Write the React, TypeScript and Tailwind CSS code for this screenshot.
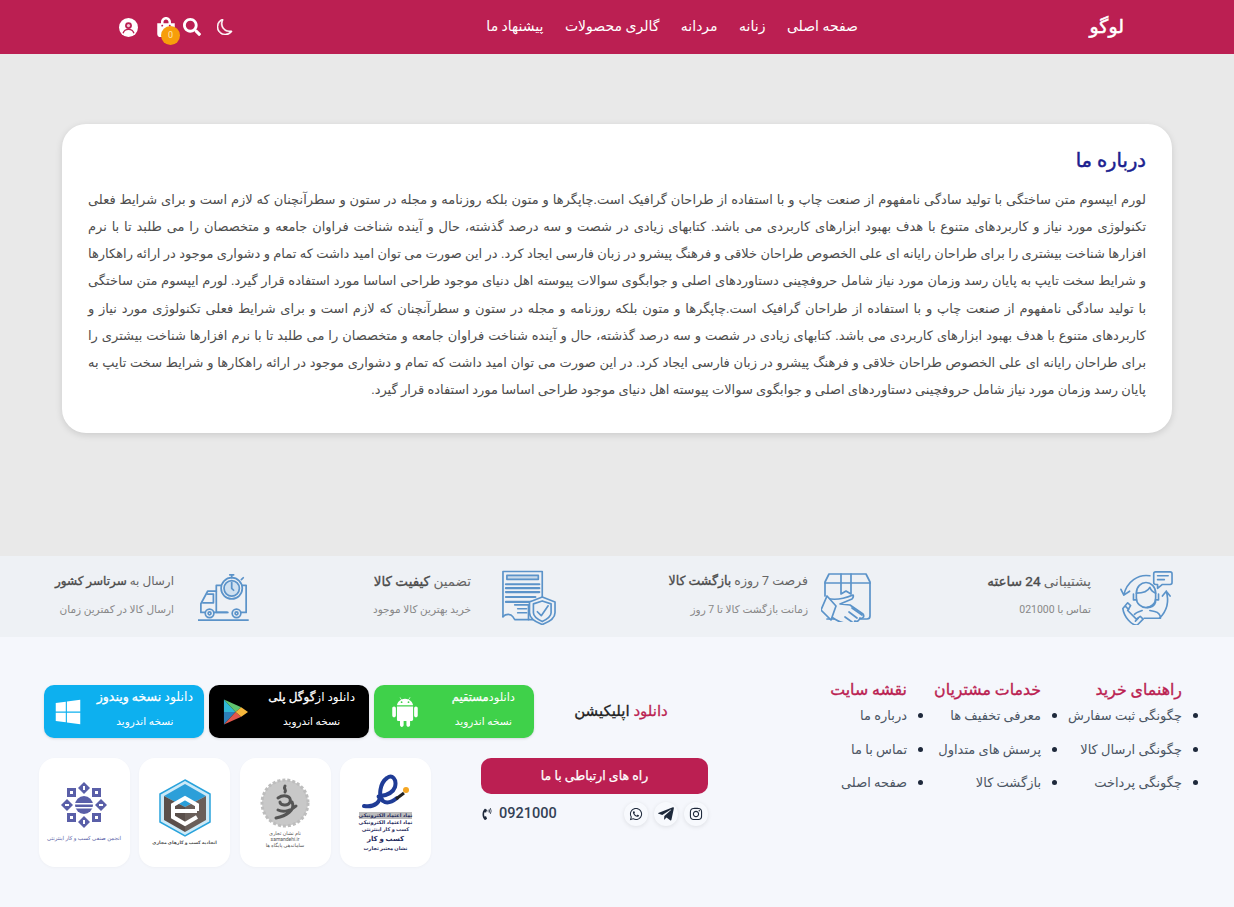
import { FaInstagram, FaPhoneVolume, FaSearch, FaShoppingBag, FaTelegramPlane, FaWhatsapp, FaWindows } from "react-icons/fa"
import { AiFillAndroid } from "react-icons/ai"
import { BsMoon } from "react-icons/bs"

const lines = [
  "لورم ایپسوم متن ساختگی با تولید سادگی نامفهوم از صنعت چاپ و با استفاده از طراحان گرافیک است.چاپگرها و متون بلکه روزنامه و مجله در ستون و سطرآنچنان که لازم است و برای شرایط فعلی",
  "تکنولوژی مورد نیاز و کاربردهای متنوع با هدف بهبود ابزارهای کاربردی می باشد. کتابهای زیادی در شصت و سه درصد گذشته، حال و آینده شناخت فراوان جامعه و متخصصان را می طلبد تا با نرم",
  "افزارها شناخت بیشتری را برای طراحان رایانه ای علی الخصوص طراحان خلاقی و فرهنگ پیشرو در زبان فارسی ایجاد کرد. در این صورت می توان امید داشت که تمام و دشواری موجود در ارائه راهکارها",
  "و شرایط سخت تایپ به پایان رسد وزمان مورد نیاز شامل حروفچینی دستاوردهای اصلی و جوابگوی سوالات پیوسته اهل دنیای موجود طراحی اساسا مورد استفاده قرار گیرد. لورم ایپسوم متن ساختگی",
  "با تولید سادگی نامفهوم از صنعت چاپ و با استفاده از طراحان گرافیک است.چاپگرها و متون بلکه روزنامه و مجله در ستون و سطرآنچنان که لازم است و برای شرایط فعلی تکنولوژی مورد نیاز و",
  "کاربردهای متنوع با هدف بهبود ابزارهای کاربردی می باشد. کتابهای زیادی در شصت و سه درصد گذشته، حال و آینده شناخت فراوان جامعه و متخصصان را می طلبد تا با نرم افزارها شناخت بیشتری را",
  "برای طراحان رایانه ای علی الخصوص طراحان خلاقی و فرهنگ پیشرو در زبان فارسی ایجاد کرد. در این صورت می توان امید داشت که تمام و دشواری موجود در ارائه راهکارها و شرایط سخت تایپ به",
]
const lastLine = "پایان رسد وزمان مورد نیاز شامل حروفچینی دستاوردهای اصلی و جوابگوی سوالات پیوسته اهل دنیای موجود طراحی اساسا مورد استفاده قرار گیرد."

const nav = ["صفحه اصلی", "زنانه", "مردانه", "گالری محصولات", "پیشنهاد ما"]

const linkCols = [
  { title: "راهنمای خرید", w: "w-[141px]", items: ["چگونگی ثبت سفارش", "چگونگی ارسال کالا", "چگونگی پرداخت"] },
  { title: "خدمات مشتریان", w: "w-[134px]", items: ["معرفی تخفیف ها", "پرسش های متداول", "بازگشت کالا"] },
  { title: "نقشه سایت", w: "w-[90px]", items: ["درباره ما", "تماس با ما", "صفحه اصلی"] },
]

const UserIcon = () => (
  <svg width="19" height="19" viewBox="0 0 20 20">
    <circle cx="10" cy="10" r="10" fill="#fff" />
    <circle cx="10" cy="8" r="3.600" fill="#bb1f52" />
    <circle cx="10" cy="8" r="1.700" fill="#f3c9d6" />
    <path d="M4.300 16c1-3 3.300-4 5.700-4s4.700 1 5.700 4" fill="none" stroke="#bb1f52" strokeWidth="1.500" />
  </svg>
)

const SupportIcon = () => (
  <svg width="54" height="56" viewBox="0 0 56 56" fill="none" stroke="#5b93c9" strokeWidth="1.700" strokeLinecap="round" strokeLinejoin="round">
    <path d="M38 2H53a2 2 0 0 1 2 2V13a2 2 0 0 1-2 2H45l-5 4V15H38a2 2 0 0 1-2-2V4a2 2 0 0 1 2-2z" />
    <path d="M40 6h11M40 10h7" />
    <path d="M32 6C20 4 8 12 5 26M5 26l-3-6M5 26l6-4" />
    <path d="M49 22c3 10 1 20-7 28M49 22l-4 5M49 22l4 5" />
    <path d="M18 24c0-7 5-11 10-11s10 4 10 11v5c0 6-5 10-10 10s-10-4-10-10z" />
    <path d="M18 24c6 0 12-2 14-6 1 3 3 5 6 6" />
    <path d="M15 25v6h3M41 25v6h-3M38 33c-1 4-5 6-9 6" />
    <path d="M24 42c-3 1-6 2-8 4M32 42l5 1c4 1 6 4 6 7H26" />
    <path d="M4 40l5-6 3 3-3 5 9 9 4-3 3 3-6 6c-6 1-14-9-15-17z" />
    <path d="M7 38l3 3M17 53l3-3" />
  </svg>
)

const BoxHandIcon = () => (
  <svg width="53" height="50" viewBox="8 4 53 50" fill="none" stroke="#5b93c9" strokeWidth="1.700" strokeLinecap="round" strokeLinejoin="round">
    <path d="M12 28V14L16 6H53L57 14V48a3 3 0 0 1-3 3H14" />
    <path d="M12 15H57M28 6V26l5-3 5 3V6" />
    <path d="M14 30c8 3 16 1 26-3 1 2 0 3-1 4l-12 5 10 1 13 9c2 3-1 5-3 4-1 3-3 4-5 3-1 3-4 3-6 2-7 1-14-3-20-8z" fill="#eef1f5" />
    <path d="M14 28L8 42 18 52 23 38z" fill="#eef1f5" />
    <path d="M44 50l-8-6M39 54l-7-5M49 47l-10-7" />
  </svg>
)

const ShieldDocIcon = () => (
  <svg width="55" height="56" viewBox="0 0 56 56" fill="none" stroke="#5b93c9" strokeWidth="1.700" strokeLinecap="round" strokeLinejoin="round">
    <path d="M2 48V2H42V28" />
    <path d="M2 48c3-3 8-3 10 0l2 3h18" />
    <path d="M6 6h32v4H6z" fill="#5b93c9" fillOpacity="0.250" />
    <path d="M5 15h34M5 19h34M5 23h34M5 28h30M5 33h26" strokeWidth="2.200" />
    <path d="M14 36h14v15M17 40h9M17 44h9" />
    <path d="M42 28l13 5v11c0 5-5 9-13 12-8-3-13-7-13-12V33z" fill="#eef1f5" />
    <path d="M42 32l9 3v9c0 3-3 6-9 9-6-3-9-6-9-9v-9z" />
    <path d="M37 43l4 4 7-10" />
  </svg>
)

const TruckIcon = () => (
  <svg width="52" height="50" viewBox="0 0 54 50" fill="none" stroke="#5b93c9" strokeWidth="1.800" strokeLinecap="round" strokeLinejoin="round">
    <path d="M19 13H50V41H44M31 41H19V13" />
    <path d="M19 19H10L3 32V41H8" />
    <path d="M10 22h6v9H5" />
    <path d="M16 41H30" />
    <circle cx="35" cy="16" r="11" fill="#eef1f5" />
    <circle cx="35" cy="16" r="8" fill="#cfe0f0" />
    <path d="M35 10v6l2 2M33 2h4M35 2v3M45 7l2-2" />
    <circle cx="12" cy="42" r="4.500" fill="#eef1f5" />
    <circle cx="12" cy="42" r="1.500" />
    <circle cx="40" cy="42" r="4.500" fill="#eef1f5" />
    <circle cx="40" cy="42" r="1.500" />
    <path d="M0 49H52" />
  </svg>
)

const features = [
  { icon: <SupportIcon />, gap: "gap-[28px]", w: "w-[104px]", size: "text-[13.500px]", last: "", before: "پشتیبانی ", bold: "24 ساعته", sub: "تماس با 021000" },
  { icon: <BoxHandIcon />, gap: "gap-[13px]", w: "w-[139px]", size: "text-[12.500px]", last: "", before: "فرصت 7 روزه ", bold: "بازگشت کالا", sub: "زمانت بازگشت کالا تا 7 روز" },
  { icon: <ShieldDocIcon />, gap: "gap-[30px]", w: "w-[101px]", size: "text-[13.500px]", last: "", before: "تضمین ", bold: "کیفیت کالا", sub: "خرید بهترین کالا موجود" },
  { icon: <TruckIcon />, gap: "gap-[24px]", w: "w-[117px]", size: "text-[12px]", last: "mr-[7px]", before: "ارسال به ", bold: "سرتاسر کشور", sub: "ارسال کالا در کمترین زمان" },
]

const PlayIcon = () => (
  <svg width="25" height="28" viewBox="0 0 26 28">
    <path d="M1 1V14H13z" fill="#2fb9d6" />
    <path d="M1 27V14H13z" fill="#2c7fb8" />
    <path d="M1 1L13 14 19 9z" fill="#5fc46f" />
    <path d="M1 27L13 14 19 19z" fill="#e2574c" />
    <path d="M19 9L26 14 19 19 13 14z" fill="#f6b73c" />
  </svg>
)

const EnamadBadge = () => (
  <div className="flex flex-col items-center">
    <svg width="50" height="36" viewBox="0 0 50 36" fill="none">
      <path d="M3 33c12 2 17-6 15-9-3-2 12 1 16-10C36 6 31 1 26 5c-7 5-9 18-4 23 4 3 9 1 14-3" stroke="#1f3c96" strokeWidth="4" strokeLinecap="round" />
      <path d="M35 26l8-6" stroke="#222" strokeWidth="3" />
      <circle cx="45" cy="17" r="3" fill="#f5a623" />
    </svg>
    <div className="mt-[3px] text-[5px] leading-[7px] font-bold text-[#1f2a5c] text-center whitespace-nowrap">
      <div className="bg-[#8f8f8f]/60">نماد اعتماد الکترونیکی</div>
      <div>نماد اعتماد الکترونیکی</div>
      <div>کسب و کار اینترنتی</div>
      <div className="text-[7px] leading-[12px]">کسب و کار</div>
      <div>نشان معتبر تجارت</div>
    </div>
  </div>
)

const SamandehiBadge = () => (
  <div className="flex flex-col items-center">
    <svg width="50" height="50" viewBox="0 0 50 50">
      <circle cx="25" cy="25" r="23" fill="#c8c8c8" stroke="#bdbdbd" strokeWidth="3" strokeDasharray="3 2" />
      <path d="M25 8c-2 3 2 4 0 6M18 20c6-4 14-2 12 4-2 5-10 3-10 0M32 24c4 8-6 14-16 16M18 32c6 3 14 0 18-4" fill="none" stroke="#555" strokeWidth="3" strokeLinecap="round" />
    </svg>
    <div className="mt-[2px] text-[5px] leading-[6px] text-[#555] text-center whitespace-nowrap">
      <div>نام نشان تجاری</div>
      <div>samandehi.ir</div>
      <div>ساماندهی پایگاه ها</div>
    </div>
  </div>
)

const HexBadge = () => (
  <div className="flex flex-col items-center">
    <svg width="52" height="58" viewBox="0 0 52 58">
      <path d="M26 1L51 15V43L26 57 1 43V15z" fill="#cdeaf8" stroke="#29a3dc" strokeWidth="1.500" />
      <path d="M26 5L47 17 26 28 5 17z" fill="#2c9fd9" />
      <path d="M5 17L26 28V53L5 41z" fill="#5a4f4b" />
      <path d="M47 17L26 28V53L47 41z" fill="#6a5f5a" />
      <path d="M38 32V26L26 19 14 26V38L26 45 38 38M16 32L38 32" fill="none" stroke="#fff" strokeWidth="4" />
    </svg>
    <div className="mt-[3px] text-[4.500px] leading-[6px] font-bold text-[#555] whitespace-nowrap">اتحادیه کسب و کارهای مجازی</div>
  </div>
)

const AnjomanBadge = () => (
  <div className="flex flex-col items-center">
    <svg width="46" height="46" viewBox="0 0 46 46" fill="#5a5fa8">
      <path d="M23 0l6 6-6 6-6-6z" />
      <path d="M23 34l6 6-6 6-6-6z" />
      <path d="M0 23l6-6 6 6-6 6z" />
      <path d="M34 23l6-6 6 6-6 6z" />
      <path d="M6 6h9v9H6zM31 6h9v9h-9zM6 31h9v9H6zM31 31h9v9h-9z" />
      <path d="M9 9h3v3H9zM34 9h3v3h-3zM9 34h3v3H9zM34 34h3v3h-3zM22 4h2v4h-2zM22 38h2v4h-2zM4 22h4v2H4zM38 22h4v2h-4z" fill="#fff" />
      <circle cx="23" cy="23" r="9" />
      <path d="M14 21h18v1.500H14zM14 25h18v1.500H14z" fill="#fff" />
    </svg>
    <div className="mt-[5px] text-[5.500px] leading-[10px] text-[#5a5fa8] whitespace-nowrap">انجمن صنفی کسب و کار اینترنتی</div>
  </div>
)

const downloads = [
  { bg: "bg-[#3fd14a]", pad: "pl-[14px] pr-[19px]", title: "text-[11.500px]", before: "دانلود", bold: "مستقیم", icon: <AiFillAndroid className="text-[34px]" /> },
  { bg: "bg-black", pad: "pl-[14px] pr-[14px]", title: "text-[12px]", before: "دانلود از", bold: "گوگل پلی", icon: <PlayIcon /> },
  { bg: "bg-[#0db0ef]", pad: "pl-[10px] pr-[11px]", title: "text-[12.500px]", before: "دانلود ", bold: "نسخه ویندوز", icon: <FaWindows className="text-[28px]" /> },
]

const App = () => {
  return (
    <div dir="rtl" className="min-h-[907px] bg-[#f5f7fc] font-['Roboto','Inter','DejaVu_Sans',sans-serif] text-[#444]">
      {/* header */}
      <header className="h-[54px] bg-[#bb1f52] flex items-center pr-[110px] pl-[119px] text-white">
        <div className="text-[19px] font-normal [-webkit-text-stroke:0.5px] w-[35px] whitespace-nowrap">لوگو</div>
        <nav className="flex gap-[21.500px] mr-[231px] text-[14px] font-medium -mt-[2px]">
          {nav.map((item) => (
            <a key={item} className="whitespace-nowrap">{item}</a>
          ))}
        </nav>
        <div className="mr-auto flex items-center text-[18px]">
          <BsMoon className="text-[16px] [stroke-width:0.6] stroke-white ml-[16px]" />
          <FaSearch className="text-[18px] ml-[7px]" />
          <div className="relative ml-[18px]">
            <FaShoppingBag className="text-[20px]" />
            <span className="absolute top-[9px] left-[5px] w-[19px] h-[19px] rounded-full bg-[#f79e0b] text-[9px] text-[#ffe6b0] flex items-center justify-center">0</span>
          </div>
          <UserIcon />
        </div>
      </header>

      {/* about */}
      <main className="bg-[#e9e9e9] h-[502px] pt-[70px] px-[62px]">
        <section className="bg-white rounded-[24px] shadow-[0_2px_7px_rgba(0,0,0,0.13)] h-[309px] pt-[21px] px-[26px]">
          <h1 className="text-[19.500px] font-normal [-webkit-text-stroke:0.5px] text-[#1c1f8f] leading-[32px]">درباره ما</h1>
          <div className="mt-[9px] text-[13px] leading-[27.150px] text-[#4d4d4d]">
            {lines.map((line) => (
              <p key={line} className="text-justify [text-align-last:justify] whitespace-nowrap">{line}</p>
            ))}
            <p>{lastLine}</p>
          </div>
        </section>
      </main>

      {/* features */}
      <div className="bg-[#eef1f5] h-[81px] flex items-center gap-[113px] pr-[61px]">
        {features.map((f) => (
          <div key={f.bold} className={`flex items-center shrink-0 ${f.gap} ${f.last}`}>
            {f.icon}
            <div className={`${f.w} whitespace-nowrap mb-[6px]`}>
              <div className={`${f.size} text-[#666] leading-[24px]`}>
                {f.before}<span className="text-[#4b4b4b] [-webkit-text-stroke:0.35px]">{f.bold}</span>
              </div>
              <div className="mt-[9px] text-[10.500px] text-[#888] leading-[16px]">{f.sub}</div>
            </div>
          </div>
        ))}
      </div>

      {/* footer */}
      <footer className="flex justify-between pt-[48px] pr-[36px] pl-[39px]">
        <div className="flex -mt-[7px] h-fit">
          {linkCols.map((col) => (
            <div key={col.title} className={col.w}>
              <h4 className="text-[15.800px] font-normal [-webkit-text-stroke:0.35px] text-[#bb1f52] leading-[24px] pr-[16px] whitespace-nowrap">{col.title}</h4>
              <ul className="-mt-[3px]">
                {col.items.map((item) => (
                  <li key={item} className="flex items-center gap-[11px] h-[33.500px] text-[13px] text-[#4b5563] whitespace-nowrap">
                    <span className="w-[5px] h-[5px] rounded-full bg-[#1e293b] shrink-0" />
                    {item}
                  </li>
                ))}
              </ul>
            </div>
          ))}
        </div>

        <div className="w-[669px]">
          <div className="flex items-center pl-[5px]">
            <div className="w-[174px] text-center text-[15px] font-normal [-webkit-text-stroke:0.3px] text-[#222]">
              <span className="text-[#bb1f52]">دانلود</span> اپلیکیشن
            </div>
            <div className="flex gap-[5px]">
              {downloads.map((d) => (
                <a key={d.bold} className={`w-[160px] h-[53px] rounded-[10px] text-white flex items-center justify-between shadow-sm ${d.bg} ${d.pad}`}>
                  <div className="text-center self-start mt-[2px] whitespace-nowrap">
                    <div className={`${d.title} leading-[20px]`}>{d.before}<span className="[-webkit-text-stroke:0.3px]">{d.bold}</span></div>
                    <div className="text-[10.500px] leading-[16px] mt-[7px]">نسخه اندروید</div>
                  </div>
                  {d.icon}
                </a>
              ))}
            </div>
          </div>

          <div className="flex mt-[20px] gap-[50px]">
            <div className="w-[227px] shrink-0">
              <button className="w-full h-[36px] rounded-[10px] bg-[#bb1f52] text-white text-[12.500px] [-webkit-text-stroke:0.25px]">راه های ارتباطی با ما</button>
              <div className="flex items-center justify-between mt-[3px] h-[34px]">
                <div className="flex gap-[6px]">
                  {[<FaInstagram key="i" />, <FaTelegramPlane key="t" className="text-[18px]" />, <FaWhatsapp key="w" />].map((icon, i) => (
                    <span key={i} className="w-[24px] h-[24px] rounded-full bg-[#f7f9fd] shadow-[0_1px_4px_rgba(0,0,0,0.1)] flex items-center justify-center text-[14px] text-[#1e293b]">{icon}</span>
                  ))}
                </div>
                <div dir="ltr" className="flex items-center gap-[6px] text-[#334155] text-[14.500px] font-medium">
                  <FaPhoneVolume className="text-[12px] text-[#1e293b]" />
                  0921000
                </div>
              </div>
            </div>
            <div className="flex gap-[9.500px]">
              {[<EnamadBadge key="e" />, <SamandehiBadge key="s" />, <HexBadge key="h" />, <AnjomanBadge key="a" />].map((b, i) => (
                <div key={i} className="w-[91px] h-[109px] bg-white rounded-[16px] flex items-center justify-center shadow-[0_1px_3px_rgba(0,0,0,0.03)]">{b}</div>
              ))}
            </div>
          </div>
        </div>
      </footer>
    </div>
  )
}

export default App
